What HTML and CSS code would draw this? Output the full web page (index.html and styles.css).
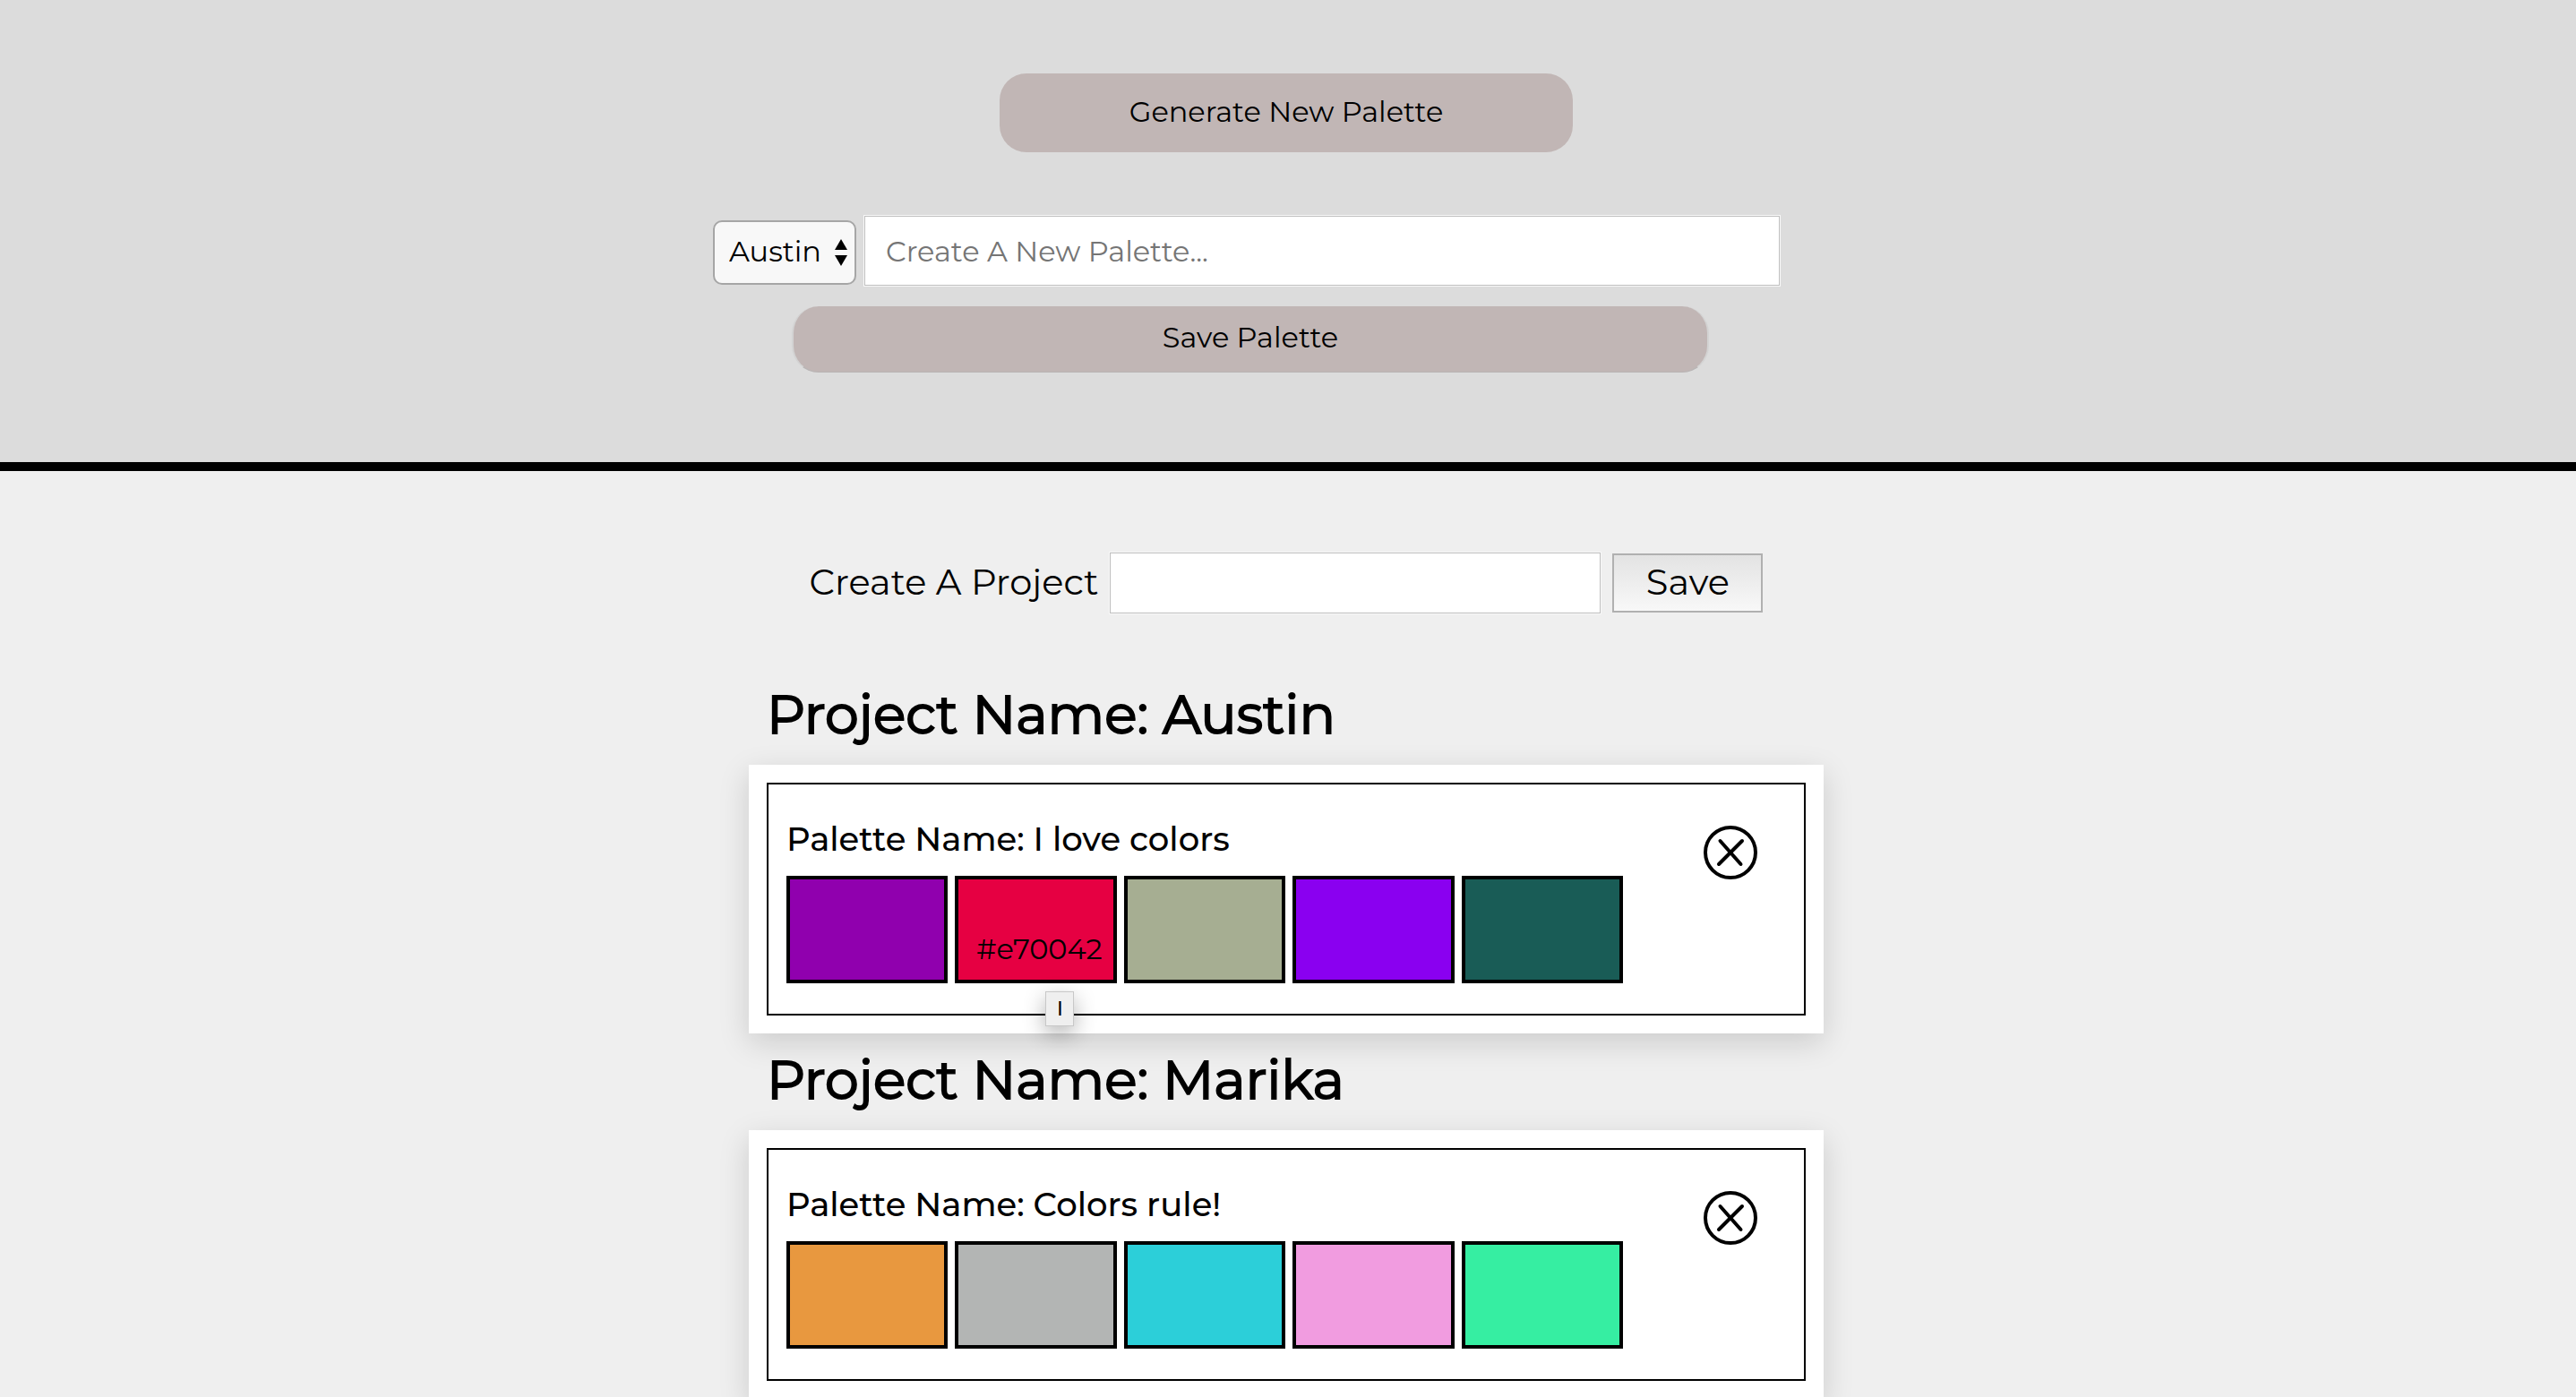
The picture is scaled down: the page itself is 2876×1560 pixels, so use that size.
FILE: index.html
```html
<!DOCTYPE html>
<html lang="en">
<head>
  <meta charset="utf-8">
  <meta name="viewport" content="width=device-width, initial-scale=1">
  <title>Palette Picker</title>
  <link rel="stylesheet" href="styles.css">
</head>
<body>
  <header class="generator">
    <button type="button" class="pill generate">Generate New Palette</button>
    <form class="palette-form">
      <div class="palette-fields">
        <div class="select-box">
          <select class="project-select" aria-label="Project">
            <option>Austin</option>
            <option>Marika</option>
          </select>
          <svg class="select-arrows" width="14" height="30" viewBox="0 0 14 30" aria-hidden="true">
            <path d="M7 0 14 12H0ZM0 18h14L7 30Z"/>
          </svg>
        </div>
        <input class="field palette-name-field" type="text" placeholder="Create A New Palette..." aria-label="Palette name">
      </div>
      <button type="button" class="pill save-palette">Save Palette</button>
    </form>
  </header>

  <main>
    <form class="project-form">
      <label for="project-name">Create A Project</label>
      <input class="field project-field" id="project-name" type="text">
      <button type="button" class="save-project">Save</button>
    </form>

    <section class="project">
      <h2 class="project-title">Project Name: Austin</h2>
      <div class="card">
        <article class="palette">
          <div class="palette-body">
            <h3 class="palette-title">Palette Name: I love colors</h3>
            <div class="swatches">
              <div class="swatch purple"></div>
              <div class="swatch red"><span>#e70042</span><div class="tooltip" role="tooltip">I</div></div>
              <div class="swatch sage"></div>
              <div class="swatch violet"></div>
              <div class="swatch teal"></div>
            </div>
          </div>
          <button type="button" class="delete" aria-label="Delete palette">
            <svg width="60" height="60" viewBox="0 0 60 60" aria-hidden="true">
              <circle cx="30" cy="30" r="28"/>
              <path d="M18.5 17 41.5 43M43 17 17 43"/>
            </svg>
          </button>
        </article>
      </div>
    </section>

    <section class="project">
      <h2 class="project-title">Project Name: Marika</h2>
      <div class="card">
        <article class="palette">
          <div class="palette-body">
            <h3 class="palette-title">Palette Name: Colors rule!</h3>
            <div class="swatches">
              <div class="swatch orange"></div>
              <div class="swatch gray"></div>
              <div class="swatch cyan"></div>
              <div class="swatch pink"></div>
              <div class="swatch green"></div>
            </div>
          </div>
          <button type="button" class="delete" aria-label="Delete palette">
            <svg width="60" height="60" viewBox="0 0 60 60" aria-hidden="true">
              <circle cx="30" cy="30" r="28"/>
              <path d="M18.5 17 41.5 43M43 17 17 43"/>
            </svg>
          </button>
        </article>
      </div>
    </section>
  </main>
</body>
</html>
```

FILE: styles.css
```css
* {
  box-sizing: border-box;
}

html {
  scrollbar-width: none;
}

body {
  margin: 0;
  background: #efefef;
  color: #000;
  font-family: Montserrat, Inter, "Liberation Sans", sans-serif;
  font-size: 32px;
}

button,
input,
select {
  margin: 0;
  color: inherit;
  font: inherit;
}

.generator {
  display: flex;
  flex-direction: column;
  align-items: center;
  gap: 70px;
  padding: 82px 24px 100px 20px;
  border-bottom: 10px solid #000;
  background: #dcdcdc;
}

.pill {
  padding: 0 0 4px;
  border: 0;
  border-radius: 30px;
  background: #c1b6b5;
}

.generate {
  width: 640px;
  max-width: 100%;
  height: 88px;
}

.palette-form {
  width: 100%;
  max-width: 1280px;
}

.palette-fields {
  display: flex;
  align-items: flex-end;
  gap: 8px;
}

.select-box {
  position: relative;
  flex: none;
  width: 160px;
  margin-bottom: 2px;
}

.project-select {
  appearance: none;
  display: block;
  width: 100%;
  height: 72px;
  padding: 0 16px 4px;
  border: 2px solid #a6a6a6;
  border-radius: 10px;
  background: #f8f8f8;
}

.select-arrows {
  position: absolute;
  top: 21px;
  right: 10px;
  pointer-events: none;
}

.field {
  min-width: 0;
  border: 1px solid #f8f8f8;
  border-radius: 0;
  background: #fff;
  box-shadow: inset 0 0 0 1px #bfbfbf;
}

.palette-name-field {
  width: 1024px;
  height: 80px;
  padding: 0 24px;
}

.palette-name-field::placeholder {
  color: #757575;
  opacity: 1;
}

.save-palette {
  display: block;
  width: 1024px;
  max-width: calc(100% - 88px);
  height: 74px;
  margin: 22px 0 0 88px;
  border: solid;
  border-width: 0 2px 1px;
  border-color: #d3d3d3 #d3d3d3 #b8b4b4;
}

.project-form {
  display: flex;
  align-items: center;
  justify-content: center;
  padding-top: 90px;
  font-size: 40px;
}

.project-form label {
  padding-bottom: 4px;
}

.project-field {
  width: 550px;
  height: 70px;
  margin: 0 12px;
  padding: 0 10px;
}

.save-project {
  width: 168px;
  height: 66px;
  padding: 0 0 4px;
  border: 2px solid #b0b0b0;
  background: linear-gradient(#e3e3e3, #f8f8f8);
}

main {
  padding: 0 24px 40px 20px;
}

.project {
  width: 100%;
  max-width: 1200px;
  margin: 0 auto;
}

.project-form + .project {
  margin-top: 60px;
}

.project-title {
  margin: 0;
  padding: 12px 20px 16px;
  font-size: 60px;
  font-weight: 400;
  line-height: 80px;
  -webkit-text-stroke: 2px #000;
}

.card {
  padding: 20px;
  background: #fff;
  box-shadow: 0 10px 32px rgba(0, 0, 0, 0.15);
}

.palette {
  display: flex;
  justify-content: space-between;
  align-items: flex-start;
  padding: 36px 52px 34px 20px;
  border: 2px solid #000;
}

.palette-body {
  flex: 0 1 934px;
}

.palette-title {
  margin: 0 0 16px;
  font-size: 37px;
  font-weight: 500;
  line-height: 50px;
}

.swatches {
  display: grid;
  grid-template-columns: repeat(5, 1fr);
  gap: 8px;
}

.swatch {
  position: relative;
  display: flex;
  align-items: flex-end;
  justify-content: flex-end;
  height: 120px;
  padding: 0 12px 14px;
  border: 4px solid #000;
  line-height: 40px;
}

.purple { background: #9000ae; }
.red { background: #e60042; }
.sage { background: #a6ae92; }
.violet { background: #8a00f0; }
.teal { background: #195c56; }
.orange { background: #e8983f; }
.gray { background: #b3b5b4; }
.cyan { background: #2ccfd9; }
.pink { background: #f19ce0; }
.green { background: #36eea2; }

.tooltip {
  position: absolute;
  top: 125px;
  left: 97px;
  width: 32px;
  border: 1px solid #c8c8c8;
  background: #efefef;
  box-shadow: 0 8px 24px rgba(0, 0, 0, 0.3);
  font-size: 22px;
  font-weight: 500;
  line-height: 37px;
  text-align: center;
}

.delete {
  flex: none;
  margin-top: 10px;
  padding: 0;
  border: 0;
  background: none;
}

.delete svg {
  display: block;
  fill: none;
  stroke: #000;
  stroke-width: 4;
  stroke-linecap: round;
}
```
